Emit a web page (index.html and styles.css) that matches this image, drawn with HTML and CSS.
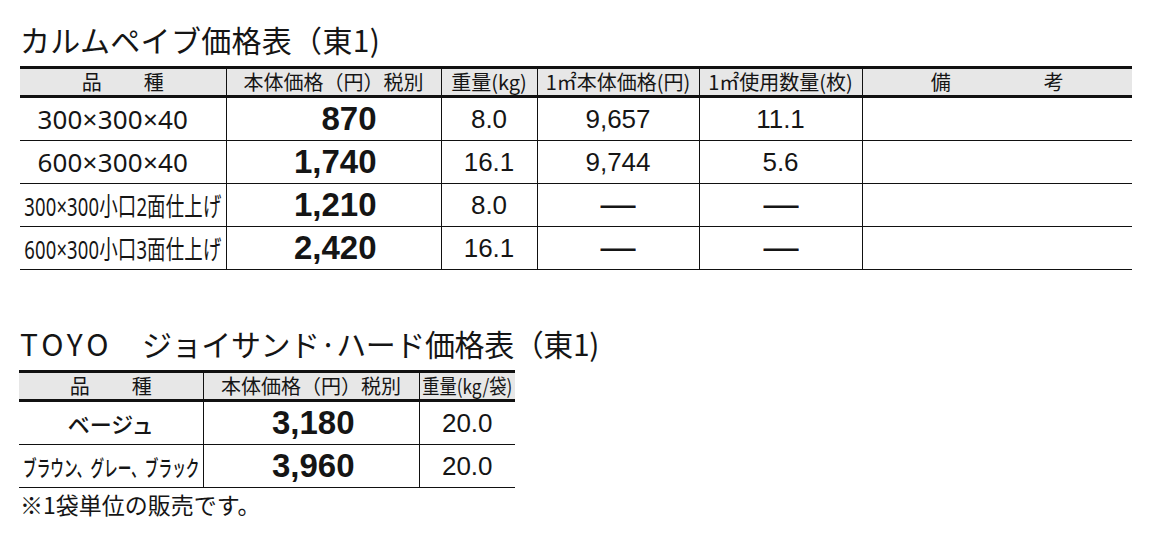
FILE: index.html
```html
<!DOCTYPE html>
<html lang="ja">
<head>
<meta charset="utf-8">
<title>価格表</title>
<link rel="stylesheet" href="styles.css">
</head>
<body>
<h2 class="title title-first">カルムペイブ価格表（東1)</h2>
<table class="price price-wide">
  <colgroup>
    <col class="c-name"><col class="c-price"><col class="c-weight"><col class="c-sqm"><col class="c-qty"><col class="c-note">
  </colgroup>
  <thead>
    <tr>
      <th><span class="spread"><span>品</span><span>種</span></span></th>
      <th>本体価格（円）税別</th>
      <th>重量(kg)</th>
      <th>1㎡本体価格(円)</th>
      <th>1㎡使用数量(枚)</th>
      <th><span class="spread spread-wide"><span>備</span><span>考</span></span></th>
    </tr>
  </thead>
  <tbody>
    <tr>
      <td class="name name-shift">300×300×40</td>
      <td class="big">870</td>
      <td class="num">8.0</td>
      <td class="num">9,657</td>
      <td class="num">11.1</td>
      <td></td>
    </tr>
    <tr>
      <td class="name name-shift">600×300×40</td>
      <td class="big">1,740</td>
      <td class="num">16.1</td>
      <td class="num">9,744</td>
      <td class="num">5.6</td>
      <td></td>
    </tr>
    <tr>
      <td class="name"><span class="squeeze">300×300小口2面仕上げ</span></td>
      <td class="big">1,210</td>
      <td class="num">8.0</td>
      <td class="dash"><span class="bar">—</span></td>
      <td class="dash"><span class="bar">—</span></td>
      <td></td>
    </tr>
    <tr>
      <td class="name"><span class="squeeze">600×300小口3面仕上げ</span></td>
      <td class="big">2,420</td>
      <td class="num">16.1</td>
      <td class="dash"><span class="bar">—</span></td>
      <td class="dash"><span class="bar">—</span></td>
      <td></td>
    </tr>
  </tbody>
</table>

<h2 class="title title-second"><span class="brand">TOYO</span>　ジョイサンド·ハード価格表（東1)</h2>
<table class="price price-narrow">
  <colgroup>
    <col class="d-name"><col class="d-price"><col class="d-weight">
  </colgroup>
  <thead>
    <tr>
      <th><span class="spread spread-mid"><span>品</span><span>種</span></span></th>
      <th>本体価格（円）税別</th>
      <th><span class="squeeze-h">重量(kg/袋)</span></th>
    </tr>
  </thead>
  <tbody>
    <tr>
      <td class="kana">ベージュ</td>
      <td class="big">3,180</td>
      <td class="num">20.0</td>
    </tr>
    <tr>
      <td class="kana"><span class="squeeze-k">ブラウン、グレー、ブラック</span></td>
      <td class="big">3,960</td>
      <td class="num">20.0</td>
    </tr>
  </tbody>
</table>
<p class="note">※1袋単位の販売です。</p>
</body>
</html>
```

FILE: styles.css
```css
html, body {
  margin: 0;
  padding: 0;
  background: #ffffff;
}
body {
  color: #151515;
  font-family: "Noto Sans CJK JP", "Noto Sans", sans-serif;
}
.title {
  margin: 0;
  padding-left: 20px;
  font-size: 30px;
  line-height: 32px;
  font-weight: 400;
  letter-spacing: 0.3px;
}
.title-second {
  letter-spacing: -0.4px;
}
.brand {
  letter-spacing: 4px;
}
.title-first {
  margin-top: 23px;
  margin-bottom: 11px;
}
.title-second {
  margin-top: 57px;
  margin-bottom: 11px;
}
.price {
  border-collapse: collapse;
  table-layout: fixed;
  margin-left: 20px;
}
.price-wide { width: 1112px; }
.price-narrow { width: 496px; margin-left: 19px; }
.c-name { width: 206px; }
.c-price { width: 215px; }
.c-weight { width: 96px; }
.c-sqm { width: 162px; }
.c-qty { width: 163px; }
.c-note { width: 270px; }
.d-name { width: 184px; }
.d-price { width: 216px; }
.d-weight { width: 96px; }

.price th {
  background: #e7e7e7;
  border-top: 3px solid #111;
  border-bottom: 3px solid #111;
  border-left: 1px solid #111;
  border-right: 1px solid #111;
  height: 26px;
  padding: 0;
  font-size: 20px;
  line-height: 26px;
  font-weight: 400;
  text-align: center;
  white-space: nowrap;
}
.price th:first-child,
.price td:first-child { border-left: none; }
.price th:last-child,
.price td:last-child { border-right: none; }

.price td {
  border: 1px solid #111;
  height: 42px;
  padding: 0;
  text-align: center;
  white-space: nowrap;
}
.spread {
  display: inline-flex;
  justify-content: space-between;
  width: 82px;
}
.spread-mid { width: 82px; }
.spread-wide { width: 133px; }

.name {
  font-family: "Noto Sans", "Noto Sans CJK JP", sans-serif;
  font-size: 26px;
  letter-spacing: 0.2px;
}
.price td.name-shift {
  padding-right: 20px;
}
.squeeze {
  display: inline-block;
  transform: scaleX(0.71);
  margin: 0 -60px;
}
.kana {
  font-size: 22px;
  font-weight: 500;
}
.squeeze-k {
  display: inline-block;
  transform: scaleX(0.62);
  margin: 0 -60px;
}
.squeeze-h {
  display: inline-block;
  transform: scaleX(0.86);
  margin: 0 -10px;
}
.price td.big {
  font-family: "Liberation Sans", Arial, sans-serif;
  font-weight: 700;
  font-size: 33px;
  text-align: right;
  padding-right: 64px;
}
.num {
  font-family: "Liberation Sans", Arial, sans-serif;
  font-size: 26px;
}
.dash .bar {
  display: inline-block;
  font-family: "Liberation Sans", Arial, sans-serif;
  font-size: 26px;
  font-weight: 700;
  line-height: 30px;
  transform: scaleX(1.35);
  position: relative;
  top: 0;
}
.note {
  margin: 2px 0 0 20px;
  font-size: 23px;
  line-height: 28px;
  font-weight: 400;
}
```
